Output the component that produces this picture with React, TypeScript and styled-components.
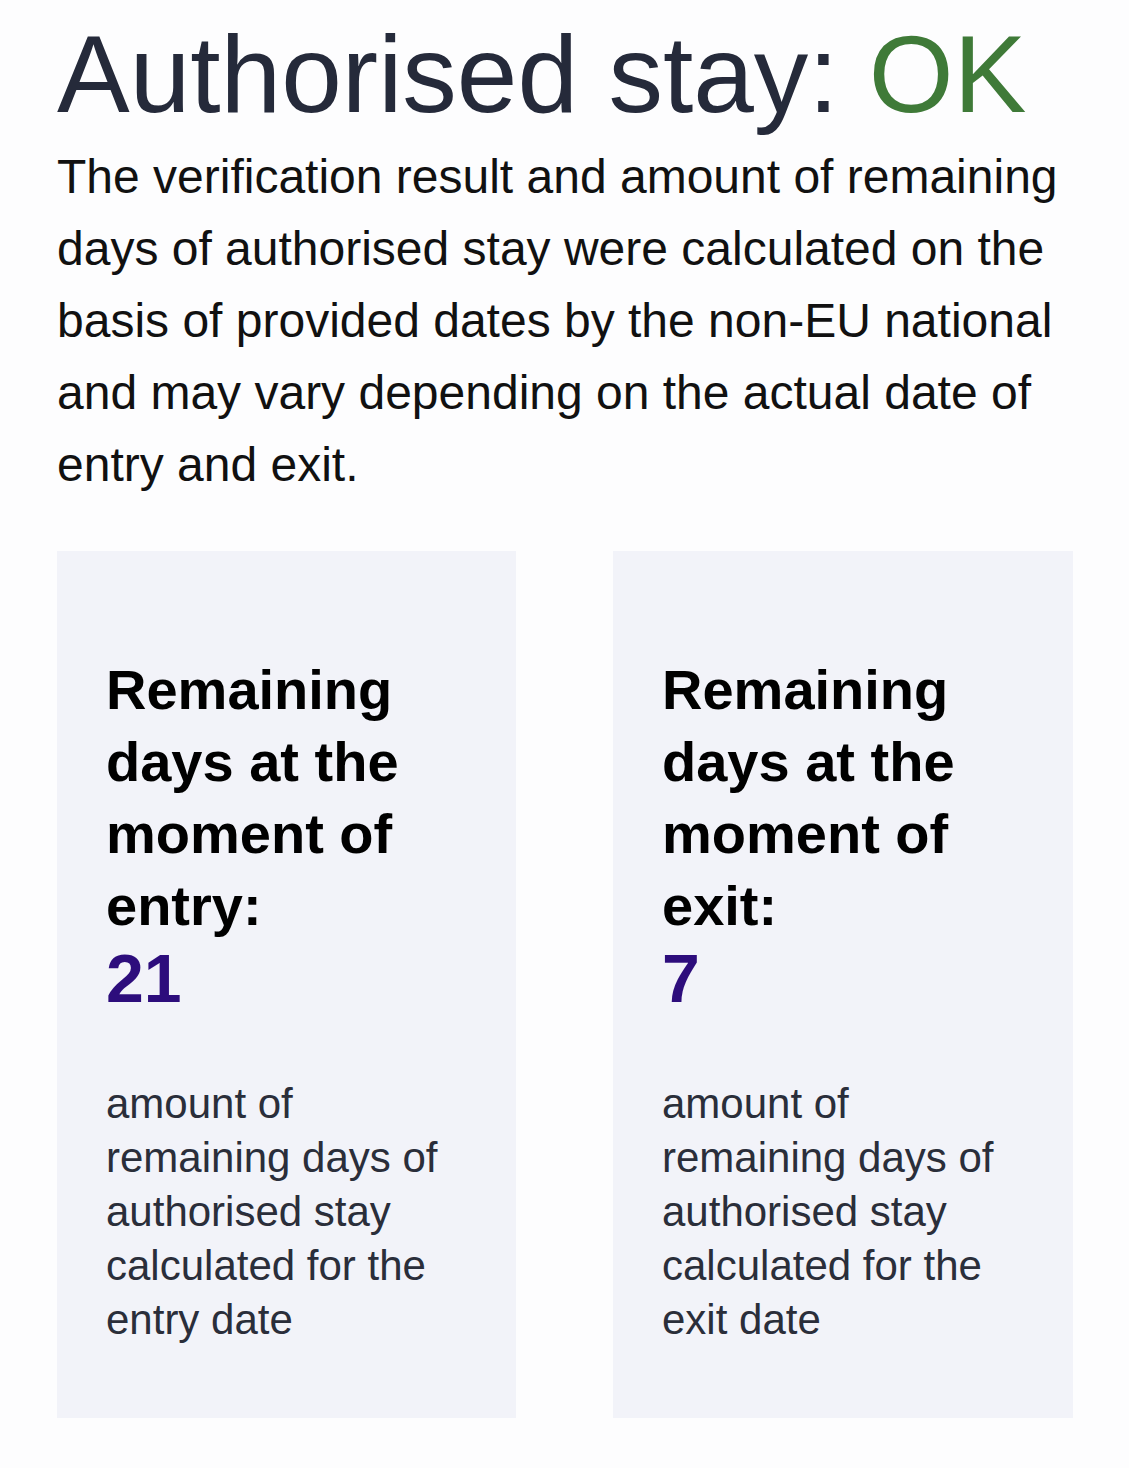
import { FC } from 'react';
import styled, { createGlobalStyle } from 'styled-components';

const GlobalStyle = createGlobalStyle({
    'html, body': {
        margin: 0,
        padding: 0,
        background: '#fdfdfe',
    },
    body: {
        fontFamily: '"Liberation Sans", Arial, sans-serif',
    },
});

const Page = styled.main({
    display: 'flex',
    flexDirection: 'column',
    padding: '20px 56px 50px 57px',
});

const Title = styled.h1({
    margin: 0,
    fontSize: '109px',
    lineHeight: '108px',
    fontWeight: 400,
    color: '#252a3a',
    whiteSpace: 'nowrap',
});

const Status = styled.span<{ $ok: boolean }>((props) => ({
    color: props.$ok ? '#3f7a38' : '#b3261e',
}));

const Intro = styled.p({
    margin: '13px 0 0',
    fontSize: '48px',
    lineHeight: '72px',
    color: '#111111',
});

const Cards = styled.section({
    display: 'grid',
    gridTemplateColumns: '459px 460px',
    columnGap: '97px',
    marginTop: '50px',
});

const Card = styled.article({
    display: 'flex',
    flexDirection: 'column',
    background: '#f2f3f9',
    padding: '103px 50px 71px 49px',
});

const CardTitle = styled.h2({
    margin: 0,
    fontSize: '56px',
    lineHeight: '72px',
    fontWeight: 700,
    color: '#000000',
});

const Days = styled.div({
    fontSize: '68px',
    lineHeight: '72px',
    fontWeight: 700,
    color: '#2d0d7c',
});

const Note = styled.p({
    margin: '63px 0 0',
    fontSize: '42px',
    lineHeight: '54px',
    color: '#2a2e3a',
});

interface ICard {
    moment: string;
    days: number;
    date: string;
}

const cards: ICard[] = [
    { moment: 'entry', days: 21, date: 'entry date' },
    { moment: 'exit', days: 7, date: 'exit date' },
];

const App: FC = (): JSX.Element => {
    return (
        <>
            <GlobalStyle />
            <Page>
                <Title>
                    Authorised stay: <Status $ok>OK</Status>
                </Title>
                <Intro>
                    The verification result and amount of remaining days of authorised stay were calculated on the
                    basis of provided dates by the non-EU national and may vary depending on the actual date of entry
                    and exit.
                </Intro>
                <Cards>
                    {cards.map((card) => (
                        <Card key={card.moment}>
                            <CardTitle>Remaining days at the moment of {card.moment}:</CardTitle>
                            <Days>{card.days}</Days>
                            <Note>amount of remaining days of authorised stay calculated for the {card.date}</Note>
                        </Card>
                    ))}
                </Cards>
            </Page>
        </>
    );
};

export default App;
